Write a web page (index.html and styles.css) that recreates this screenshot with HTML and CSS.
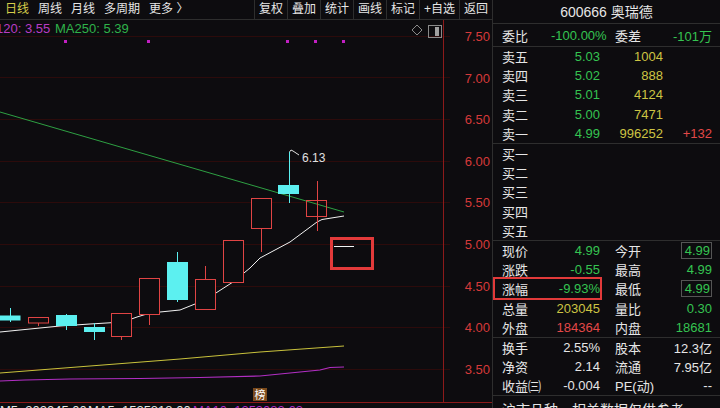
FILE: index.html
```html
<!DOCTYPE html>
<html lang="zh">
  <head>
    <meta charset="UTF-8" />
    <meta name="viewport" content="width=device-width, initial-scale=1.0" />
    <title>600666 奥瑞德</title>
    <link rel="stylesheet" href="styles.css">
  </head>
  <body>
    <div class="app">
      <section class="chart-side">
        <div class="toolbar">
          <div class="periods">
            <span class="period active">日线</span>
            <span class="period">周线</span>
            <span class="period">月线</span>
            <span class="period">多周期</span>
            <span class="period">更多 〉</span>
          </div>
          <div class="tools">
            <span class="tool">复权</span>
            <span class="tool">叠加</span>
            <span class="tool">统计</span>
            <span class="tool">画线</span>
            <span class="tool">标记</span>
            <span class="tool">+自选</span>
            <span class="tool">返回</span>
          </div>
        </div>

        <svg class="chart" width="492" height="388" viewBox="0 20 492 388">
          <!-- grid -->
          <g stroke="#2c0b0b" stroke-width="1">
            <line x1="0" y1="36.5" x2="450" y2="36.5" />
            <line x1="0" y1="77.5" x2="450" y2="77.5" />
            <line x1="0" y1="119.5" x2="450" y2="119.5" />
            <line x1="0" y1="161.5" x2="450" y2="161.5" />
            <line x1="0" y1="202.5" x2="450" y2="202.5" />
            <line x1="0" y1="244.5" x2="450" y2="244.5" />
            <line x1="0" y1="286.5" x2="450" y2="286.5" />
            <line x1="0" y1="327.5" x2="450" y2="327.5" />
            <line x1="0" y1="369.5" x2="450" y2="369.5" />
          </g>
          <line x1="443.5" y1="20" x2="443.5" y2="403" stroke="#8c1a1a" />
          <line x1="0" y1="402.5" x2="492" y2="402.5" stroke="#8c1a1a" />

          <g class="axis" text-anchor="end">
            <text x="490" y="41">7.50</text>
            <text x="490" y="83">7.00</text>
            <text x="490" y="124">6.50</text>
            <text x="490" y="166">6.00</text>
            <text x="490" y="207">5.50</text>
            <text x="490" y="249">5.00</text>
            <text x="490" y="291">4.50</text>
            <text x="490" y="332">4.00</text>
            <text x="490" y="374">3.50</text>
          </g>

          <!-- legend -->
          <text class="legend" x="-4" y="33"><tspan fill="#b83cc4">120: 3.55</tspan><tspan x="55" fill="#2fb34a">MA250: 5.39</tspan></text>
          <polygon points="417,25 422,30 417,35 412,30" fill="none" stroke="#8a8a8a" />
          <rect x="428.5" y="25.5" width="13" height="12" fill="none" stroke="#8a8a8a" />
          <rect x="435" y="27" width="4" height="9" fill="#a0a0a0" />

          <g fill="#c21fc2">
            <rect x="64" y="40" width="3" height="3" />
            <rect x="147" y="40" width="3" height="3" />
            <rect x="286" y="40" width="3" height="3" />
            <rect x="314" y="40" width="3" height="3" />
            <rect x="342" y="40" width="3" height="3" />
          </g>

          <!-- moving averages -->
          <polyline points="0,112 344,212" fill="none" stroke="#2ea043" />
          <polyline points="0,373 90,366 180,359 260,352 344,346" fill="none" stroke="#c9c23c" />
          <polyline points="0,381 25,380 70,379 140,378.5 200,377.5 260,376 320,370 330,367.5 344,367" fill="none" stroke="#b22fc4" stroke-width="1.2" />
          <polyline points="0,332 30,329 60,326 90,324 123,322 137,317 150,313 180,310 205,300 233,282 250,268 260,258 290,242 317,222 322,219.5 344,216" fill="none" stroke="#f2f2f2" />

          <!-- candles -->
          <g stroke="#5cf0f0" fill="#5cf0f0">
            <line x1="10.5" y1="308" x2="10.5" y2="322" />
            <rect x="0" y="316" width="20" height="4" />
            <line x1="66.5" y1="314" x2="66.5" y2="330" />
            <rect x="56.5" y="315.5" width="20" height="10" />
            <line x1="94.5" y1="323" x2="94.5" y2="340" />
            <rect x="84.5" y="327.5" width="20" height="4" />
            <line x1="177.5" y1="252" x2="177.5" y2="302" />
            <rect x="167.5" y="262.5" width="20" height="37" />
            <line x1="289.5" y1="152" x2="289.5" y2="203" />
            <rect x="278.5" y="185.5" width="20" height="8" />
          </g>
          <g stroke="#e04444" fill="none">
            <line x1="38.5" y1="323" x2="38.5" y2="326" />
            <rect x="28.5" y="317.5" width="20" height="5.5" fill="#0d0c0f" />
            <line x1="121.5" y1="337" x2="121.5" y2="340" />
            <rect x="111.5" y="313.5" width="20" height="23" fill="#0d0c0f" />
            <line x1="149.5" y1="315" x2="149.5" y2="325" />
            <rect x="139.5" y="278.5" width="20" height="36" fill="#0d0c0f" />
            <line x1="205.5" y1="266" x2="205.5" y2="279" />
            <rect x="195.5" y="279.5" width="20" height="30" fill="#0d0c0f" />
            <rect x="223.5" y="240.5" width="20" height="42" fill="#0d0c0f" />
            <line x1="261.5" y1="229" x2="261.5" y2="252" />
            <rect x="251.5" y="198.5" width="20" height="30" fill="#0d0c0f" />
            <line x1="317.5" y1="181" x2="317.5" y2="231" />
            <rect x="306.5" y="200.5" width="20" height="16" fill="none" />
          </g>
          <line x1="334" y1="246.5" x2="354" y2="246.5" stroke="#f2f2f2" />
          <polyline points="289.5,152 291,150 293,151 299,155" fill="none" stroke="#e0e0e0" />
          <text class="peak" x="302" y="162">6.13</text>

          <!-- highlight -->
          <rect x="331.5" y="238.5" width="41" height="30" fill="none" stroke="#e23a3a" stroke-width="3" />

          <rect x="253" y="388" width="14" height="13" fill="#7a4a1c" />
          <text class="badge" x="260" y="399" text-anchor="middle">榜</text>

          <text class="volume" x="0" y="415"><tspan fill="#e6e6e6">M5: 202045.00</tspan><tspan x="88" fill="#e6e6e6">MA5: 1525818.00</tspan><tspan x="193" fill="#b22fc4">MA10: 1353083.63</tspan></text>
        </svg>
      </section>

      <aside class="quote">
        <div class="q-title">600666 奥瑞德</div>

        <div class="q-row q-ratio">
          <span class="lbl">委比</span>
          <span class="num green">-100.00%</span>
          <span class="lbl2">委差</span>
          <span class="num green">-101万</span>
        </div>

        <div class="q-block">
          <div class="book-row"><span class="lbl">卖五</span><span class="num green">5.03</span><span class="num yellow">1004</span><span class="num"></span></div>
          <div class="book-row"><span class="lbl">卖四</span><span class="num green">5.02</span><span class="num yellow">888</span><span class="num"></span></div>
          <div class="book-row"><span class="lbl">卖三</span><span class="num green">5.01</span><span class="num yellow">4124</span><span class="num"></span></div>
          <div class="book-row"><span class="lbl">卖二</span><span class="num green">5.00</span><span class="num yellow">7471</span><span class="num"></span></div>
          <div class="book-row"><span class="lbl">卖一</span><span class="num green">4.99</span><span class="num yellow">996252</span><span class="num red">+132</span></div>
        </div>

        <div class="q-block">
          <div class="book-row"><span class="lbl">买一</span></div>
          <div class="book-row"><span class="lbl">买二</span></div>
          <div class="book-row"><span class="lbl">买三</span></div>
          <div class="book-row"><span class="lbl">买四</span></div>
          <div class="book-row"><span class="lbl">买五</span></div>
        </div>

        <div class="q-block">
          <div class="stat-row"><span class="lbl">现价</span><span class="num green">4.99</span><span class="lbl2">今开</span><span class="num green"><span class="boxed">4.99</span></span></div>
          <div class="stat-row"><span class="lbl">涨跌</span><span class="num green">-0.55</span><span class="lbl2">最高</span><span class="num green">4.99</span></div>
          <div class="stat-row"><span class="mark"></span><span class="lbl">涨幅</span><span class="num green">-9.93%</span><span class="lbl2">最低</span><span class="num green"><span class="boxed">4.99</span></span></div>
          <div class="stat-row"><span class="lbl">总量</span><span class="num yellow">203045</span><span class="lbl2">量比</span><span class="num green">0.30</span></div>
          <div class="stat-row"><span class="lbl">外盘</span><span class="num red">184364</span><span class="lbl2">内盘</span><span class="num green">18681</span></div>
        </div>

        <div class="q-block">
          <div class="stat-row"><span class="lbl">换手</span><span class="num">2.55%</span><span class="lbl2">股本</span><span class="num">12.3亿</span></div>
          <div class="stat-row"><span class="lbl">净资</span><span class="num">2.14</span><span class="lbl2">流通</span><span class="num">7.95亿</span></div>
          <div class="stat-row"><span class="lbl">收益㈢</span><span class="num">-0.004</span><span class="lbl2">PE(动)</span><span class="num">--</span></div>
        </div>

        <div class="q-note">沪市品种，相关数据仅供参考</div>
      </aside>
    </div>
  </body>
</html>
```

FILE: styles.css
```css
body {
  margin: 0;
  background-color: #0d0c0f;
  color: #e6e6e6;
  font-family: "Liberation Sans", "Noto Sans CJK SC", sans-serif;
  overflow: hidden;
}

.app {
  display: flex;
  width: 720px;
  height: 408px;
  overflow: hidden;
}

.chart-side {
  width: 492px;
  display: flex;
  flex-direction: column;
}

.toolbar {
  height: 19px;
  border-bottom: 1px solid #2e2e2e;
  display: flex;
  justify-content: space-between;
  font-size: 12px;
  line-height: 19px;
}

.periods {
  display: flex;
  gap: 9px;
  padding-left: 5px;
}

.period.active {
  color: #d6cc4a;
}

.tools {
  display: flex;
}

.tool {
  padding: 0 4px;
  border-left: 1px solid #2e2e2e;
}

.chart {
  display: block;
}

.axis {
  fill: #d63a3a;
  font-size: 13px;
}

.legend {
  font-size: 13px;
}

.peak {
  fill: #e0e0e0;
  font-size: 12px;
}

.badge {
  fill: #ffffff;
  font-size: 11px;
}

.volume {
  font-size: 13px;
}

.quote {
  width: 227px;
  border-left: 1px solid #2e2e2e;
  font-size: 13px;
}

.q-title {
  height: 23px;
  line-height: 24px;
  text-align: center;
  font-size: 14px;
  border-bottom: 1px solid #2e2e2e;
}

.q-row,
.stat-row {
  display: grid;
  grid-template-columns: 49px 49px 64px 48px;
  padding-left: 9px;
  align-items: center;
}

.q-ratio {
  height: 22px;
  border-bottom: 1px solid #2e2e2e;
}

.q-block {
  border-bottom: 1px solid #2e2e2e;
}

.book-row {
  display: grid;
  grid-template-columns: 49px 49px 63px 49px;
  padding-left: 9px;
  height: 19.2px;
  align-items: center;
}

.stat-row {
  height: 19.2px;
  position: relative;
}

.lbl {
  white-space: nowrap;
}

.lbl2 {
  padding-left: 15px;
  white-space: nowrap;
}

.num {
  text-align: right;
  white-space: nowrap;
}

.green {
  color: #35c451;
}

.yellow {
  color: #cdc443;
}

.red {
  color: #e34848;
}

.boxed {
  border: 1px solid #555555;
  padding: 0 1px 0 3px;
}

.mark {
  position: absolute;
  left: 0;
  top: -2px;
  width: 105px;
  height: 19px;
  border: 2px solid #e23a3a;
}

.q-note {
  padding: 3px 0 0 9px;
  font-size: 14px;
  white-space: nowrap;
}
```
